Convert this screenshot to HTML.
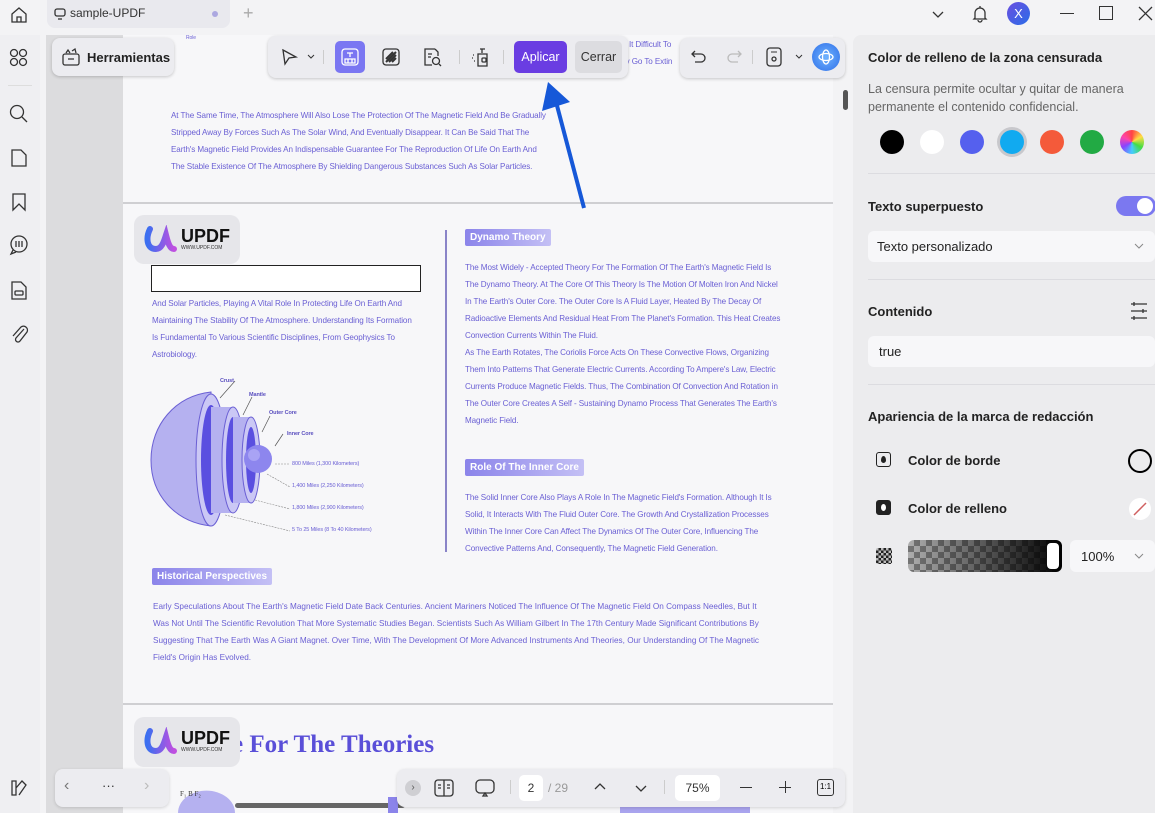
<!DOCTYPE html>
<html><head><meta charset="utf-8">
<style>
*{margin:0;padding:0;box-sizing:border-box}
body{width:1155px;height:813px;overflow:hidden;background:#f3f3f5;font-family:"Liberation Sans",sans-serif;position:relative}
.a{position:absolute}
.t{position:absolute;white-space:nowrap;font-size:8.1px;color:#6a5fd4;letter-spacing:-0.1px}
.ic{position:absolute;fill:none;stroke:#333;stroke-width:1.3}
.rp{font-size:13px;color:#222}
.b{font-weight:bold}
.sw{position:absolute;top:130px;width:24px;height:24px;border-radius:50%}
.tag{position:absolute;color:#fff;font-weight:bold;font-size:10px;padding:3px 5px;background:linear-gradient(90deg,#8b84ea,#c4c0f5);border-radius:2px}
</style></head><body>
<svg class="ic" style="left:9px;top:5px" width="20" height="20" viewBox="0 0 20 20"><path d="M3 9 L10 3 L17 9 V17 H3 Z"/><path d="M8 17 V12 H12 V17"/></svg>
<div class="a" style="left:47px;top:0;width:183px;height:28px;background:#e9e9ee;border-radius:0 0 8px 8px"></div>
<svg class="ic" style="left:54px;top:8px" width="12" height="12" viewBox="0 0 12 12"><rect x="1" y="1" width="10" height="7" rx="2"/><path d="M4 11 H8"/></svg>
<div class="a" style="left:70px;top:6px;font-size:12px;color:#333">sample-UPDF</div>
<div class="a" style="left:212px;top:11px;width:6px;height:6px;border-radius:50%;background:#aca8e0"></div>
<div class="a" style="left:243px;top:3px;font-size:18px;color:#aaa;font-weight:200">+</div>
<svg class="ic" style="left:931px;top:8px" width="14" height="12"><path d="M2 4 L7 9 L12 4"/></svg>
<svg class="ic" style="left:970px;top:4px" width="20" height="20" viewBox="0 0 20 20"><path d="M5 14 V9 A5 5 0 0 1 15 9 V14 L16 15 H4 Z M8 16 A2 2 0 0 0 12 16 M10 2 V4"/></svg>
<div class="a" style="left:1007px;top:2px;width:23px;height:23px;border-radius:50%;background:linear-gradient(135deg,#6a4ee0,#2a6de8);color:#fff;font-size:13px;text-align:center;line-height:23px">X</div>
<div class="a" style="left:1060px;top:13px;width:14px;height:1px;background:#333"></div>
<div class="a" style="left:1099px;top:6px;width:14px;height:14px;border:1.3px solid #333"></div>
<svg class="ic" style="left:1138px;top:6px" width="15" height="15"><path d="M1 1 L14 14 M14 1 L1 14"/></svg>

<div class="a" style="left:0;top:35px;width:40px;height:778px;background:#efeff2"></div>
<svg class="ic" style="left:9px;top:48px" width="20" height="20"><circle cx="5" cy="5" r="3.5"/><circle cx="14" cy="5" r="3.5"/><circle cx="5" cy="14" r="3.5"/><circle cx="14" cy="14" r="3.5"/></svg>
<div class="a" style="left:8px;top:85px;width:24px;height:1px;background:#ddd"></div>
<svg class="ic" style="left:8px;top:103px" width="22" height="22"><circle cx="9" cy="9" r="6.5"/><path d="M14 14 L19 19"/></svg>
<svg class="ic" style="left:10px;top:148px" width="18" height="20"><path d="M2 2 H11 L16 7 V18 H2 Z"/></svg>
<svg class="ic" style="left:11px;top:192px" width="16" height="20"><path d="M2 2 H14 V18 L8 12 L2 18 Z"/></svg>
<svg class="ic" style="left:8px;top:234px" width="22" height="22"><circle cx="11" cy="10" r="8"/><path d="M8 7 V13 M11 7 V13 M14 7 V13 M5 16 L3 20 L8 18"/></svg>
<svg class="ic" style="left:10px;top:280px" width="18" height="21"><path d="M2 2 H11 L16 7 V19 H2 Z"/><rect x="5" y="11" width="8" height="4" rx="1"/></svg>
<svg class="ic" style="left:9px;top:323px" width="20" height="22"><path d="M15 6 L7 15 A2.5 2.5 0 0 0 11 18 L18 9 A4 4 0 0 0 12 4 L4 13"/></svg>
<svg class="ic" style="left:9px;top:778px" width="20" height="20"><path d="M3 3 V17 H7 V3 Z M7 10 L13 3 L17 7 L10 17"/></svg>

<div class="a" style="left:46px;top:35px;width:78px;height:778px;background:#dcdcde"></div>
<div class="a" style="left:123px;top:35px;width:710px;height:778px;background:#f7f7f9"></div>
<div class="a" style="left:833px;top:35px;width:20px;height:778px;background:#f3f3f5"></div>
<div class="a" style="left:843px;top:90px;width:5px;height:20px;border-radius:3px;background:#555"></div>
<div class="a" style="left:123px;top:202px;width:710px;height:2px;background:#cfcfd2"></div>
<div class="a" style="left:123px;top:703px;width:710px;height:2px;background:#cfcfd2"></div>

<div class="t" style="left:171px;top:111px">At The Same Time, The Atmosphere Will Also Lose The Protection Of The Magnetic Field And Be Gradually</div>
<div class="t" style="left:171px;top:128px">Stripped Away By Forces Such As The Solar Wind, And Eventually Disappear. It Can Be Said That The</div>
<div class="t" style="left:171px;top:145px">Earth's Magnetic Field Provides An Indispensable Guarantee For The Reproduction Of Life On Earth And</div>
<div class="t" style="left:171px;top:162px">The Stable Existence Of The Atmosphere By Shielding Dangerous Substances Such As Solar Particles.</div>
<div class="t" style="left:186px;top:35px;font-size:5px">Role</div>
<div class="t" style="left:618px;top:40px">nd It Difficult To</div>
<div class="t" style="left:620px;top:57px">kly Go To Extin</div>

<div class="a" style="left:134px;top:215px;width:106px;height:49px;background:#e6e6ea;border-radius:10px"></div>
<svg class="a" style="left:144px;top:225px" width="34" height="28" viewBox="0 0 34 28"><defs><linearGradient id="g" x1="0" x2="1"><stop offset="0" stop-color="#3b6ff0"/><stop offset="1" stop-color="#c04fe0"/></linearGradient></defs><path d="M6 4 C2 12 2 24 12 24 C18 24 20 16 22 10 C24 18 26 24 30 24" stroke="url(#g)" stroke-width="6" fill="none" stroke-linecap="round"/></svg>
<div class="a" style="left:181px;top:226px;font-size:18px;font-weight:bold;color:#111">UPDF</div>
<div class="a" style="left:181px;top:245px;font-size:5px;color:#333">WWW.UPDF.COM</div>

<div class="a" style="left:151px;top:265px;width:270px;height:27px;background:#fff;border:1.5px solid #222"></div>
<div class="t" style="left:152px;top:299px">And Solar Particles, Playing A Vital Role In Protecting Life On Earth And</div>
<div class="t" style="left:152px;top:316px">Maintaining The Stability Of The Atmosphere. Understanding Its Formation</div>
<div class="t" style="left:152px;top:333px">Is Fundamental To Various Scientific Disciplines, From Geophysics To</div>
<div class="t" style="left:152px;top:350px">Astrobiology.</div>

<svg class="a" style="left:145px;top:370px" width="280" height="175" viewBox="0 0 280 175">
<path d="M66 22 C30 26 6 55 6 90 C6 125 30 152 66 156 Z" fill="#b5b1f0" stroke="#6a5fd4"/>
<ellipse cx="66" cy="90" rx="15" ry="66" fill="#cbc8f5" stroke="#6a5fd4"/>
<ellipse cx="66" cy="90" rx="10" ry="55" fill="#5a4fe0"/>
<path d="M66 37 h22 v106 h-22 z" fill="#b5b1f0"/>
<ellipse cx="88" cy="90" rx="11" ry="53" fill="#cbc8f5" stroke="#6a5fd4"/>
<ellipse cx="88" cy="90" rx="7" ry="43" fill="#5a4fe0"/>
<path d="M88 47 h18 v86 h-18 z" fill="#b5b1f0"/>
<ellipse cx="106" cy="90" rx="9" ry="43" fill="#cbc8f5" stroke="#6a5fd4"/>
<ellipse cx="106" cy="90" rx="5" ry="33" fill="#5a4fe0"/>
<circle cx="113" cy="89" r="14" fill="#8d86ee"/>
<circle cx="109" cy="85" r="6" fill="#a9a3f5"/>
<path d="M75 28 L90 11 M98 45 L107 27 M117 62 L125 46 M130 76 L138 64" stroke="#555" stroke-width=".7"/>
<path d="M130 94 H145 M122 104 L145 117 M110 130 L145 139 M80 145 L145 161" stroke="#888" stroke-width=".6" stroke-dasharray="2 1"/>
</svg>
<div class="t" style="left:220px;top:378px;font-size:5.5px;font-weight:bold;color:#5a4fbf">Crust</div>
<div class="t" style="left:249px;top:392px;font-size:5.5px;font-weight:bold;color:#5a4fbf">Mantle</div>
<div class="t" style="left:269px;top:410px;font-size:5.5px;font-weight:bold;color:#5a4fbf">Outer Core</div>
<div class="t" style="left:287px;top:431px;font-size:5.5px;font-weight:bold;color:#5a4fbf">Inner Core</div>
<div class="t" style="left:292px;top:461px;font-size:5.5px">800 Miles (1,300 Kilometers)</div>
<div class="t" style="left:292px;top:483px;font-size:5.5px">1,400 Miles (2,250 Kilometers)</div>
<div class="t" style="left:292px;top:505px;font-size:5.5px">1,800 Miles (2,900 Kilometers)</div>
<div class="t" style="left:292px;top:527px;font-size:5.5px">5 To 25 Miles (8 To 40 Kilometers)</div>
<div class="a" style="left:445px;top:230px;width:1.5px;height:322px;background:#8a84c8"></div>

<div class="tag" style="left:465px;top:229px">Dynamo Theory</div>
<div class="t" style="left:465px;top:263px">The Most Widely - Accepted Theory For The Formation Of The Earth's Magnetic Field Is</div>
<div class="t" style="left:465px;top:280px">The Dynamo Theory. At The Core Of This Theory Is The Motion Of Molten Iron And Nickel</div>
<div class="t" style="left:465px;top:297px">In The Earth's Outer Core. The Outer Core Is A Fluid Layer, Heated By The Decay Of</div>
<div class="t" style="left:465px;top:314px">Radioactive Elements And Residual Heat From The Planet's Formation. This Heat Creates</div>
<div class="t" style="left:465px;top:331px">Convection Currents Within The Fluid.</div>
<div class="t" style="left:465px;top:348px">As The Earth Rotates, The Coriolis Force Acts On These Convective Flows, Organizing</div>
<div class="t" style="left:465px;top:365px">Them Into Patterns That Generate Electric Currents. According To Ampere's Law, Electric</div>
<div class="t" style="left:465px;top:382px">Currents Produce Magnetic Fields. Thus, The Combination Of Convection And Rotation in</div>
<div class="t" style="left:465px;top:399px">The Outer Core Creates A Self - Sustaining Dynamo Process That Generates The Earth's</div>
<div class="t" style="left:465px;top:416px">Magnetic Field.</div>
<div class="tag" style="left:465px;top:459px">Role Of The Inner Core</div>
<div class="t" style="left:465px;top:493px">The Solid Inner Core Also Plays A Role In The Magnetic Field's Formation. Although It Is</div>
<div class="t" style="left:465px;top:510px">Solid, It Interacts With The Fluid Outer Core. The Growth And Crystallization Processes</div>
<div class="t" style="left:465px;top:527px">Within The Inner Core Can Affect The Dynamics Of The Outer Core, Influencing The</div>
<div class="t" style="left:465px;top:544px">Convective Patterns And, Consequently, The Magnetic Field Generation.</div>

<div class="tag" style="left:152px;top:568px">Historical Perspectives</div>
<div class="t" style="left:153px;top:602px;font-size:8.2px;letter-spacing:0">Early Speculations About The Earth's Magnetic Field Date Back Centuries. Ancient Mariners Noticed The Influence Of The Magnetic Field On Compass Needles, But It</div>
<div class="t" style="left:153px;top:619px;font-size:8.2px;letter-spacing:0">Was Not Until The Scientific Revolution That More Systematic Studies Began. Scientists Such As William Gilbert In The 17th Century Made Significant Contributions By</div>
<div class="t" style="left:153px;top:636px;font-size:8.2px;letter-spacing:0">Suggesting That The Earth Was A Giant Magnet. Over Time, With The Development Of More Advanced Instruments And Theories, Our Understanding Of The Magnetic</div>
<div class="t" style="left:153px;top:653px;font-size:8.2px;letter-spacing:0">Field's Origin Has Evolved.</div>

<div class="a" style="left:232px;top:731px;font-family:'Liberation Serif',serif;font-weight:bold;font-size:25px;color:#5a4fd8">e For The Theories</div>
<div class="a" style="left:134px;top:717px;width:106px;height:50px;background:#e6e6ea;border-radius:10px"></div>
<svg class="a" style="left:144px;top:727px" width="34" height="28" viewBox="0 0 34 28"><path d="M6 4 C2 12 2 24 12 24 C18 24 20 16 22 10 C24 18 26 24 30 24" stroke="url(#g)" stroke-width="6" fill="none" stroke-linecap="round"/></svg>
<div class="a" style="left:181px;top:728px;font-size:18px;font-weight:bold;color:#111">UPDF</div>
<div class="a" style="left:181px;top:747px;font-size:5px;color:#333">WWW.UPDF.COM</div>
<svg class="a" style="left:170px;top:786px" width="80" height="27"><path d="M8 27 A28 22 0 0 1 65 27 Z" fill="#b5b1f0"/><text x="10" y="10" font-size="7" fill="#333" font-family="Liberation Serif">F₁  B  F₂</text></svg>
<div class="a" style="left:235px;top:803px;width:170px;height:5px;background:#666;border-radius:3px"></div>
<div class="a" style="left:388px;top:797px;width:10px;height:16px;background:#8b84ea"></div>
<div class="a" style="left:620px;top:805px;width:130px;height:8px;background:#a9a4ee"></div>

<div class="a" style="left:52px;top:38px;width:122px;height:38px;background:#ececf0;border-radius:8px;box-shadow:0 1px 3px rgba(0,0,0,.2)"></div>
<svg class="ic" style="left:60px;top:46px" width="22" height="22"><rect x="3" y="8" width="16" height="11" rx="2"/><path d="M8 13 H14 M6 7 L8 4 L10 7 M12 5 L15 3 L16 7"/></svg>
<div class="a" style="left:87px;top:50px;font-size:13px;font-weight:bold;color:#222">Herramientas</div>

<div class="a" style="left:268px;top:36px;width:360px;height:42px;background:#ececf0;border-radius:8px;box-shadow:0 1px 3px rgba(0,0,0,.2)"></div>
<svg class="ic" style="left:279px;top:47px" width="40" height="20"><path d="M4 3 L17 10 L10 11 L6 17 Z"/><path d="M29 8 L32 11 L35 8" stroke-width="1"/></svg>
<div class="a" style="left:323px;top:50px;width:1px;height:14px;background:#ccc"></div>
<div class="a" style="left:335px;top:41px;width:30px;height:32px;background:#7a76f2;border-radius:5px"></div>
<svg class="ic" style="left:340px;top:47px;stroke:#fff" width="20" height="20"><rect x="2" y="2" width="16" height="16" rx="3"/><path d="M7 6 H13 M10 6 V10 M5 12 H15 V16 H5 Z M8 12 V16 M12 12 V16"/></svg>
<svg class="ic" style="left:381px;top:47px" width="20" height="20"><rect x="2" y="2" width="16" height="16" rx="3"/><path d="M5 12 L12 5 M5 15 L15 5 M8 15 L15 8 M11 15 L15 11" stroke-width="2"/></svg>
<svg class="ic" style="left:421px;top:46px" width="22" height="22"><path d="M14 3 H4 V19 H11"/><path d="M14 3 L17 6 V10"/><circle cx="15" cy="15" r="3.5"/><path d="M18 18 L20 20 M7 8 H11 M7 11 H10"/></svg>
<div class="a" style="left:459px;top:50px;width:1px;height:14px;background:#ccc"></div>
<svg class="ic" style="left:470px;top:45px" width="22" height="24"><path d="M10 4 H15 M12 4 V8 M8 9 H17 V21 H8 Z"/><rect x="12" y="13" width="4" height="4" rx="1"/><path d="M3 10 h1 M2 13 h1 M4 16 h1"/></svg>
<div class="a" style="left:503px;top:50px;width:1px;height:14px;background:#ccc"></div>
<div class="a" style="left:514px;top:41px;width:53px;height:32px;background:#6a3de2;border-radius:5px;color:#fff;font-size:12.5px;text-align:center;line-height:32px">Aplicar</div>
<div class="a" style="left:575px;top:41px;width:47px;height:32px;background:#dcdce0;border-radius:5px;color:#333;font-size:12.5px;text-align:center;line-height:32px">Cerrar</div>

<div class="a" style="left:680px;top:38px;width:165px;height:40px;background:#ececf0;border-radius:8px;box-shadow:0 1px 3px rgba(0,0,0,.2)"></div>
<svg class="ic" style="left:690px;top:48px" width="18" height="18"><path d="M5 3 L2 6 L5 9 M2 6 H11 A4 4 0 0 1 11 14 H5"/></svg>
<svg class="ic" style="left:725px;top:48px;stroke:#bbb" width="18" height="18"><path d="M13 3 L16 6 L13 9 M16 6 H7 A4 4 0 0 0 7 14 H13"/></svg>
<div class="a" style="left:752px;top:50px;width:1px;height:14px;background:#ccc"></div>
<svg class="ic" style="left:764px;top:45px" width="42" height="24"><rect x="3" y="3" width="14" height="18" rx="3"/><circle cx="10" cy="14" r="2"/><path d="M7 7 H13 M32 10 L35 13 L38 10" stroke-width="1"/></svg>
<div class="a" style="left:812px;top:43px;width:28px;height:28px;border-radius:50%;background:radial-gradient(circle,#6fb3ff,#2f6fe8)"></div>
<svg class="ic" style="left:817px;top:48px;stroke:#fff" width="18" height="18"><ellipse cx="9" cy="9" rx="7" ry="3.5"/><ellipse cx="9" cy="9" rx="3.5" ry="7"/></svg>

<svg class="a" style="left:540px;top:78px" width="60" height="135"><path d="M44 130 L15 20" stroke="#1658d8" stroke-width="4"/><path d="M8 4 L2 33 L30 24 Z" fill="#1658d8"/></svg>

<div class="a" style="left:55px;top:769px;width:114px;height:38px;background:#ececf0;border-radius:8px;box-shadow:0 1px 3px rgba(0,0,0,.15)"></div>
<div class="a" style="left:64px;top:777px;font-size:16px;color:#777">‹</div>
<div class="a" style="left:102px;top:778px;font-size:13px;color:#333">···</div>
<div class="a" style="left:144px;top:777px;font-size:16px;color:#bbb">›</div>
<div class="a" style="left:397px;top:769px;width:448px;height:38px;background:#ececf0;border-radius:8px;box-shadow:0 1px 3px rgba(0,0,0,.15)"></div>
<div class="a" style="left:405px;top:780px;width:16px;height:16px;border-radius:50%;background:#cfcfd3;font-size:10px;text-align:center;line-height:16px;color:#555">›</div>
<svg class="ic" style="left:433px;top:777px" width="22" height="22"><rect x="2" y="3" width="18" height="16" rx="3"/><path d="M11 3 V19 M5 8 H8 M5 11 H8 M14 8 H17 M14 11 H17"/></svg>
<svg class="ic" style="left:474px;top:777px" width="22" height="22"><rect x="2" y="3" width="18" height="13" rx="4"/><path d="M9 19 L11 16 L13 19 Z"/></svg>
<div class="a" style="left:510px;top:780px;width:1px;height:14px;background:#ccc"></div>
<div class="a" style="left:519px;top:775px;width:24px;height:26px;background:#fff;border-radius:5px;font-size:12px;text-align:center;line-height:26px;color:#333">2</div>
<div class="a" style="left:548px;top:781px;font-size:12px;color:#999">/ 29</div>
<svg class="ic" style="left:593px;top:781px" width="14" height="12"><path d="M2 8 L7 3 L12 8"/></svg>
<svg class="ic" style="left:634px;top:782px" width="14" height="12"><path d="M2 4 L7 9 L12 4"/></svg>
<div class="a" style="left:664px;top:780px;width:1px;height:14px;background:#ccc"></div>
<div class="a" style="left:675px;top:775px;width:45px;height:26px;background:#fff;border-radius:5px;font-size:12px;text-align:center;line-height:26px;color:#333">75%</div>
<div class="a" style="left:740px;top:787px;width:12px;height:1.3px;background:#333"></div>
<div class="a" style="left:779px;top:787px;width:12px;height:1.3px;background:#333"></div>
<div class="a" style="left:784.5px;top:781px;width:1.3px;height:12px;background:#333"></div>
<div class="a" style="left:817px;top:779px;width:17px;height:17px;border:1.3px solid #333;border-radius:3px;font-size:8px;text-align:center;line-height:14px">1:1</div>

<div class="a" style="left:853px;top:35px;width:302px;height:778px;background:#ececee;border-radius:8px 0 0 0"></div>
<div class="a rp b" style="left:868px;top:50px">Color de relleno de la zona censurada</div>
<div class="a" style="left:868px;top:80px;font-size:12.5px;color:#666;line-height:18px;width:280px">La censura permite ocultar y quitar de manera permanente el contenido confidencial.</div>
<div class="sw" style="left:880px;background:#000"></div>
<div class="sw" style="left:920px;background:#fff"></div>
<div class="sw" style="left:960px;background:#5560ee"></div>
<div class="sw" style="left:1000px;background:#11aaf0;box-shadow:0 0 0 3px #c8c8cc"></div>
<div class="sw" style="left:1040px;background:#f45a3a"></div>
<div class="sw" style="left:1080px;background:#22aa44"></div>
<div class="sw" style="left:1120px;background:conic-gradient(#f44,#fd4,#4d4,#4cf,#84f,#f4a,#f44)"></div>
<div class="a" style="left:868px;top:173px;width:287px;height:1px;background:#dcdce0"></div>
<div class="a rp b" style="left:868px;top:199px">Texto superpuesto</div>
<div class="a" style="left:1116px;top:196px;width:40px;height:20px;border-radius:10px;background:#7b78f0"></div>
<div class="a" style="left:1137px;top:198px;width:16px;height:16px;border-radius:50%;background:#fff"></div>
<div class="a" style="left:868px;top:231px;width:287px;height:31px;background:#f7f7f9;border-radius:6px"></div>
<div class="a rp" style="left:877px;top:239px">Texto personalizado</div>
<svg class="ic" style="left:1134px;top:242px;stroke:#888" width="10" height="8"><path d="M1 2 L5 6 L9 2" stroke-width="1"/></svg>
<div class="a" style="left:868px;top:279px;width:287px;height:1px;background:#dcdce0"></div>
<div class="a rp b" style="left:868px;top:304px">Contenido</div>
<svg class="ic" style="left:1130px;top:301px" width="18" height="20"><path d="M1 3 H17 M1 10 H17 M1 17 H17 M4 1 V5 M13 8 V12 M4 15 V19"/></svg>
<div class="a" style="left:868px;top:336px;width:287px;height:31px;background:#f7f7f9;border-radius:6px"></div>
<div class="a rp" style="left:879px;top:344px">true</div>
<div class="a" style="left:868px;top:384px;width:287px;height:1px;background:#dcdce0"></div>
<div class="a rp b" style="left:868px;top:409px">Apariencia de la marca de redacción</div>
<div class="a" style="left:876px;top:452px;width:15px;height:15px;border:1.5px solid #222;border-radius:3px"></div>
<div class="a" style="left:881px;top:456px;width:5px;height:7px;background:#222;border-radius:50% 50% 50% 50%/60% 60% 40% 40%"></div>
<div class="a rp b" style="left:908px;top:453px">Color de borde</div>
<div class="a" style="left:1128px;top:449px;width:24px;height:24px;border:2.5px solid #000;border-radius:50%"></div>
<div class="a" style="left:876px;top:500px;width:15px;height:15px;background:#222;border-radius:3px"></div>
<div class="a" style="left:881px;top:504px;width:5px;height:7px;background:#fff;border-radius:50%"></div>
<div class="a rp b" style="left:908px;top:501px">Color de relleno</div>
<div class="a" style="left:1129px;top:498px;width:22px;height:22px;background:#fff;border-radius:50%"></div>
<svg class="a" style="left:1129px;top:498px" width="22" height="22"><path d="M5 17 L17 5" stroke="#d06060" stroke-width="1.5"/></svg>
<div class="a" style="left:876px;top:548px;width:16px;height:16px;background:repeating-conic-gradient(#222 0 25%,#bbb 0 50%) 0 0/5px 5px;border-radius:2px"></div>
<div class="a" style="left:908px;top:540px;width:154px;height:32px;border-radius:6px;background:linear-gradient(90deg,rgba(0,0,0,.15),#000),repeating-conic-gradient(#888 0 25%,#ccc 0 50%) 0 0/12px 12px"></div>
<div class="a" style="left:1047px;top:543px;width:12px;height:26px;background:#fff;border-radius:4px"></div>
<div class="a" style="left:1070px;top:540px;width:85px;height:32px;background:#f7f7f9;border-radius:6px"></div>
<div class="a rp" style="left:1081px;top:549px">100%</div>
<svg class="ic" style="left:1134px;top:552px;stroke:#888" width="10" height="8"><path d="M1 2 L5 6 L9 2" stroke-width="1"/></svg>
</body></html>
